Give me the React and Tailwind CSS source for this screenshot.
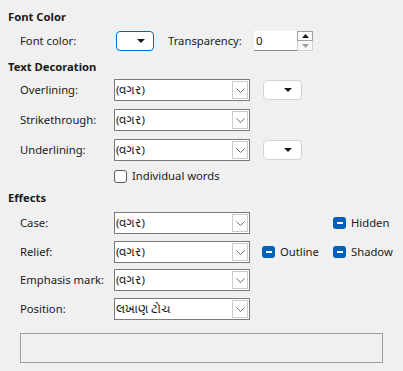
import React from 'react';

const font = { fontFamily: '"Segoe UI", "Noto Sans", sans-serif' };

const Chevron = () => (
  <svg width="9" height="5" viewBox="0 0 9 5" fill="none">
    <path d="M0.5 0.5 L4.5 4.5 L8.5 0.5" stroke="#6b6b6b" strokeWidth="1" />
  </svg>
);

const Caret = () => (
  <svg width="8" height="4" viewBox="0 0 8 4">
    <path d="M0 0 H8 L4 4 Z" fill="#1a1a1a" />
  </svg>
);

const Select = ({ value }) => (
  <div className="flex h-[22px] w-[136px] items-stretch border border-[#7a7a7a] bg-white">
    <div className="flex-1 overflow-hidden pl-[1px] text-[11.5px] leading-[20px] text-[#1a1a1a] whitespace-nowrap">
      {value}
    </div>
    <div className="m-[1px] flex w-[16px] items-center justify-center border border-[#cccccc] bg-white">
      <Chevron />
    </div>
  </div>
);

const ColorButton = ({ focused }) => (
  <div
    className={
      focused
        ? 'flex h-[20px] w-[38px] items-center justify-end rounded-[4px] border border-[#0067c0] bg-white pr-[8px]'
        : 'flex h-[20px] w-[39px] items-center justify-end rounded-[4px] border border-[#d4d4d4] bg-white pr-[9px]'
    }
  >
    <Caret />
  </div>
);

const TriCheck = ({ label }) => (
  <div className="flex items-center gap-[5px]">
    <div className="flex h-[12px] w-[13px] items-center justify-center rounded-[3px] bg-[#005fb8]">
      <div className="h-[1.5px] w-[6px] bg-white" />
    </div>
    <span className="text-[11.25px] leading-[16px] text-[#1a1a1a]">{label}</span>
  </div>
);

const Heading = ({ children, className }) => (
  <div className={`h-[18px] pl-[8px] text-[11.25px] font-bold leading-[18px] text-[#1a1a1a] ${className}`}>
    {children}
  </div>
);

const Label = ({ children, w = 'w-[94px]' }) => (
  <div className={`${w} shrink-0 text-[11.25px] leading-[16px] text-[#1a1a1a]`}>{children}</div>
);

export default function App() {
  const none = '(વગર)';
  return (
    <div className="h-[371px] w-[403px] overflow-hidden bg-[#f0f0f0] pt-[8px]" style={font}>
      <Heading>Font Color</Heading>

      <div className="mt-[5px] flex h-[20px] items-center pl-[20px]">
        <Label w="w-[96px]">Font color:</Label>
        <ColorButton focused />
        <div className="ml-[14px] w-[86px] text-[11.25px] leading-[16px] text-[#1a1a1a]">Transparency:</div>
        <div className="flex h-[20px]">
          <div className="w-[43px] border-b border-[#8a8a8a] bg-white pl-[2px] text-[11.5px] leading-[19px] text-[#1a1a1a]">0</div>
          <div className="flex w-[16px] flex-col bg-white">
            <div className="flex h-[10px] items-center justify-center border border-[#a0a0a0] bg-[#fdfdfd]">
              <svg width="7" height="4" viewBox="0 0 7 4"><path d="M0 4 L3.5 0 L7 4 Z" fill="#1a1a1a" /></svg>
            </div>
            <div className="flex h-[10px] items-center justify-center border border-t-0 border-[#d0d0d0] bg-[#f7f7f7]">
              <svg width="7" height="4" viewBox="0 0 7 4"><path d="M0 0 H7 L3.5 4 Z" fill="#a0a0a0" /></svg>
            </div>
          </div>
        </div>
      </div>

      <Heading className="mt-[7px]">Text Decoration</Heading>

      <div className="mt-[3px] flex h-[22px] items-center pl-[20px]">
        <Label>Overlining:</Label>
        <Select value={none} />
        <div className="ml-[13px]">
          <ColorButton />
        </div>
      </div>

      <div className="mt-[8px] flex h-[22px] items-center pl-[20px]">
        <Label>Strikethrough:</Label>
        <Select value={none} />
      </div>

      <div className="mt-[8px] flex h-[22px] items-center pl-[20px]">
        <Label>Underlining:</Label>
        <Select value={none} />
        <div className="ml-[13px]">
          <ColorButton />
        </div>
      </div>

      <div className="mt-[5px] flex h-[20px] items-center pl-[114px]">
        <div className="h-[13px] w-[13px] rounded-[3px] border border-[#5a5a5a] bg-white" />
        <span className="ml-[5px] text-[11.25px] leading-[16px] text-[#1a1a1a]">Individual words</span>
      </div>

      <Heading className="mt-[3px]">Effects</Heading>

      <div className="mt-[5px] flex h-[22px] items-center pl-[20px]">
        <Label>Case:</Label>
        <Select value={none} />
        <div className="ml-[83px]">
          <TriCheck label="Hidden" />
        </div>
      </div>

      <div className="mt-[7px] flex h-[22px] items-center pl-[20px]">
        <Label>Relief:</Label>
        <Select value={none} />
        <div className="ml-[12px] w-[71px]">
          <TriCheck label="Outline" />
        </div>
        <TriCheck label="Shadow" />
      </div>

      <div className="mt-[6px] flex h-[22px] items-center pl-[20px]">
        <Label>Emphasis mark:</Label>
        <Select value={none} />
      </div>

      <div className="mt-[7px] flex h-[22px] items-center pl-[20px]">
        <Label>Position:</Label>
        <Select value="લખાણ ટોચ" />
      </div>

      <div className="ml-[20px] mt-[13px] h-[30px] w-[363px] border border-[#a0a0a0] bg-[#f0f0f0]" />
    </div>
  );
}
